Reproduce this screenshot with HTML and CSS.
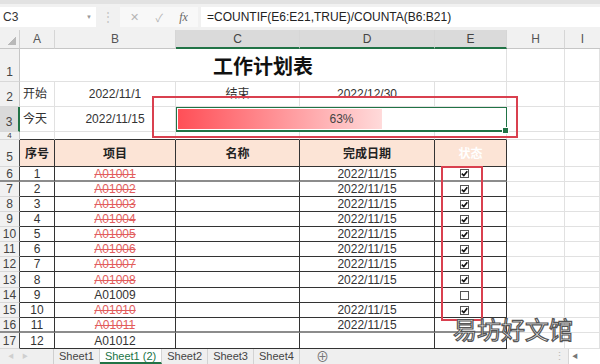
FILE: index.html
```html
<!DOCTYPE html>
<html lang="zh-CN">
<head>
  <meta charset="UTF-8" />
  <meta name="viewport" content="width=device-width, initial-scale=1.0" />
  <title>工作计划表</title>
  <link rel="stylesheet" href="styles.css">
</head>
<body>
  <div class="formula-bar">
    <div class="name-box"><span>C3</span><span class="caret">▼</span></div>
    <div class="grip">⋮</div>
    <div class="fx-buttons">
      <span class="fx-btn">✕</span>
      <span class="fx-btn">✓</span>
      <span class="fx">fx</span>
    </div>
    <div class="formula">=COUNTIF(E6:E21,TRUE)/COUNTA(B6:B21)</div>
  </div>

  <div class="sheet">
    <!-- column headers -->
    <div class="corner"></div>
    <div class="col-head">A</div>
    <div class="col-head">B</div>
    <div class="col-head sel">C</div>
    <div class="col-head sel">D</div>
    <div class="col-head sel">E</div>
    <div class="col-head">H</div>
    <div class="col-head last">I</div>

    <!-- row 1 -->
    <div class="cell row-head bottom">1</div>
    <div class="cell title">工作计划表</div>
    <div class="cell"></div>
    <div class="cell"></div>

    <!-- row 2 -->
    <div class="cell row-head bottom">2</div>
    <div class="cell left">开始</div>
    <div class="cell">2022/11/1</div>
    <div class="cell">结束</div>
    <div class="cell">2022/12/30</div>
    <div class="cell"></div>
    <div class="cell"></div>
    <div class="cell"></div>

    <!-- row 3 -->
    <div class="cell row-head bottom sel">3</div>
    <div class="cell left">今天</div>
    <div class="cell">2022/11/15</div>
    <div class="cell progress">63%</div>
    <div class="cell"></div>
    <div class="cell"></div>

    <!-- row 4 -->
    <div class="cell row-head short">4</div>
    <div class="cell edge"></div>
    <div class="cell edge"></div>
    <div class="cell edge"></div>
    <div class="cell edge"></div>
    <div class="cell edge"></div>
    <div class="cell"></div>
    <div class="cell"></div>

    <!-- row 5 -->
    <div class="cell row-head bottom tb">5</div>
    <div class="cell t th">序号</div>
    <div class="cell t th">项目</div>
    <div class="cell t th">名称</div>
    <div class="cell t th">完成日期</div>
    <div class="cell t th ghost">状态</div>
    <div class="cell"></div>
    <div class="cell"></div>

    <div id="rows" class="rows"></div>

    <div class="mark mark-progress"></div>
    <div class="mark mark-check"></div>
    <div class="watermark">易坊好文馆</div>
  </div>

  <div class="tabs">
    <div class="tab-nav"><span>◀</span><span>▶</span></div>
    <div class="tab">Sheet1</div>
    <div class="tab active">Sheet1 (2)</div>
    <div class="tab">Sheet2</div>
    <div class="tab">Sheet3</div>
    <div class="tab">Sheet4</div>
    <div class="tab-add">⊕</div>
    <div class="tab-space"></div>
    <div class="tab-grip">⋮</div>
    <div class="hscroll"><span>◀</span></div>
  </div>

  <script>
    // 序号, 项目, 是否完成, 是否显示复选框
    const tasks = [
      [1, 'A01001', true, true],
      [2, 'A01002', true, true],
      [3, 'A01003', true, true],
      [4, 'A01004', true, true],
      [5, 'A01005', true, true],
      [6, 'A01006', true, true],
      [7, 'A01007', true, true],
      [8, 'A01008', true, true],
      [9, 'A01009', false, true],
      [10, 'A01010', true, true],
      [11, 'A01011', true, false],
      [12, 'A01012', false, false]
    ];

    const checkSvg = '<svg width="7" height="7" viewBox="0 0 7 7"><path d="M0.8 3.6 L2.8 5.6 L6.3 1.2" stroke="#111" stroke-width="1.6" fill="none"/></svg>';

    const rowsEl = document.getElementById('rows');
    let html = '';

    tasks.forEach((task, i) => {
      const [no, code, done, hasBox] = task;
      const rowNo = i + 6;
      const pb = (rowNo === 6 || rowNo === 16) ? ' pb' : '';
      let box = '';
      if (hasBox) {
        box = `<span class="checkbox">${done ? checkSvg : ''}</span>`;
      }
      html += `
        <div class="cell row-head tb${pb}">${rowNo}</div>
        <div class="cell t${pb}">${no}</div>
        <div class="cell t${pb}"><span class="${done ? 'strike' : ''}">${code}</span></div>
        <div class="cell t${pb}"></div>
        <div class="cell t${pb}">${done ? '2022/11/15' : ''}</div>
        <div class="cell t chk${pb}">${box}</div>
        <div class="cell"></div>
        <div class="cell"></div>
      `;
    });

    rowsEl.innerHTML = html;
  </script>
</body>
</html>
```

FILE: styles.css
```css
* {
  box-sizing: border-box;
}

body {
  margin: 0;
  width: 600px;
  height: 364px;
  overflow: hidden;
  font-family: "Liberation Sans", "Noto Sans CJK SC", sans-serif;
  font-size: 12px;
  color: #333;
  background: #fff;
}

/* formula bar */
.formula-bar {
  display: flex;
  align-items: center;
  height: 30px;
  background: #f1f1f1;
  border-top: 4px solid #e2e2e2;
}

.name-box {
  width: 96px;
  height: 20px;
  background: #fff;
  display: flex;
  align-items: center;
  justify-content: space-between;
  padding: 0 4px 0 3px;
  color: #333;
}

.caret {
  font-size: 6px;
  color: #999;
}

.grip {
  width: 24px;
  text-align: center;
  color: #c4c4c4;
}

.fx-buttons {
  width: 78px;
  height: 20px;
  background: #f8f8f8;
  display: flex;
  align-items: center;
  justify-content: space-around;
  padding: 0 2px;
}

.fx-btn {
  color: #b5b5b5;
  font-size: 11px;
}

.fx {
  font-family: "Liberation Serif", serif;
  font-style: italic;
  color: #666;
  font-size: 12px;
}

.formula {
  flex: 1;
  height: 20px;
  margin-left: 3px;
  padding-left: 6px;
  line-height: 20px;
  background: #fff;
  color: #222;
}

/* sheet grid */
.sheet {
  position: relative;
  display: grid;
  grid-template-columns: 20px 35px 121px 124px 135px 72px 58px 35px;
  grid-template-rows: 19px 33px 25px 25px 8px 27px
    15px 15px 15px 15px 15px 15px 15px 16px 15px 15px 15px 16px;
}

.rows {
  display: contents;
}

.corner {
  background:
    linear-gradient(135deg, transparent 55%, #b9b9b9 55%) no-repeat right 3px bottom 3px / 9px 9px,
    #f1f1f1;
  border-right: 1px solid #d0d0d0;
  border-bottom: 1px solid #c6c6c6;
}

.col-head {
  display: flex;
  align-items: center;
  justify-content: center;
  background: #f1f1f1;
  color: #555;
  border-right: 1px solid #d6d6d6;
  border-bottom: 1px solid #c6c6c6;
}

.col-head.sel {
  background: #dadada;
  color: #444;
  border-bottom: 2px solid #217346;
}

.col-head.last {
  border-right: none;
}

.cell {
  display: flex;
  align-items: center;
  justify-content: center;
  overflow: hidden;
  white-space: nowrap;
  line-height: 14px;
  border-right: 1px solid #e1e1e1;
  border-bottom: 1px solid #e1e1e1;
}

.row-head {
  background: #f1f1f1;
  color: #444;
  border-right: 1px solid #c6c6c6;
  border-bottom-color: #d8d8d8;
}

.row-head.bottom {
  align-items: flex-end;
  padding-bottom: 2px;
}

.row-head.short {
  font-size: 8px;
  line-height: 7px;
}

.row-head.sel {
  background: #dadada;
  border-right: 2px solid #217346;
}

.row-head.tb {
  border-right-color: #444;
}

.left {
  justify-content: flex-start;
  padding-left: 3px;
}

.title {
  grid-column: span 5;
  font-family: "Noto Sans CJK SC", sans-serif;
  font-size: 20px;
  font-weight: 700;
  color: #111;
  line-height: 24px;
  padding-top: 2px;
}

.progress {
  position: relative;
  grid-column: span 3;
  color: #444;
  border: 1px solid #217346;
  border-bottom-width: 2px;
  overflow: visible;
  background: linear-gradient(90deg, #ff4f57, #ffdada) no-repeat 1px 1px / 62% calc(100% - 2px);
}

.progress::after {
  content: "";
  position: absolute;
  right: -3px;
  bottom: -4px;
  width: 5px;
  height: 5px;
  background: #217346;
  border: 1px solid #fff;
}

.edge {
  border-bottom-color: #333;
}

.t {
  border-right-color: #333;
  border-bottom-color: #333;
}

.th {
  background: #fce4d6;
  font-family: "Noto Sans CJK SC", sans-serif;
  font-weight: 700;
  color: #222;
}

.ghost {
  color: #fff;
}

.pb {
  border-bottom: 2px solid #8c8c8c;
}

.strike {
  color: #e25d5d;
  text-decoration: line-through;
}

.chk {
  justify-content: flex-start;
  padding-left: 25px;
}

.checkbox {
  width: 9px;
  height: 9px;
  border: 1px solid #555;
  background: #fff;
  display: flex;
  align-items: center;
  justify-content: center;
}

/* annotations */
.mark {
  position: absolute;
  border: 2px solid #d9404f;
}

.mark-progress {
  left: 152px;
  top: 66px;
  width: 366px;
  height: 42px;
}

.mark-check {
  left: 441px;
  top: 136px;
  width: 42px;
  height: 155px;
}

.watermark {
  position: absolute;
  left: 453px;
  top: 284px;
  font-family: "Noto Sans CJK SC", sans-serif;
  font-size: 24px;
  line-height: 30px;
  color: #fff;
  -webkit-text-stroke: 1.2px #555;
}

/* sheet tabs */
.tabs {
  display: flex;
  height: 15px;
  background: #efefef;
  font-size: 11px;
  line-height: 15px;
  color: #444;
}

.tab-nav {
  width: 54px;
  display: flex;
  gap: 8px;
  padding-left: 8px;
  font-size: 6px;
  color: #cfcfcf;
  border-right: 1px solid #cfcfcf;
}

.tab {
  padding: 0 5px;
  border-right: 1px solid #d3d3d3;
}

.tab.active {
  background: #fff;
  color: #217346;
  border-bottom: 2px solid #217346;
}

.tab-add {
  margin-left: 16px;
  color: #777;
  font-size: 13px;
}

.tab-space {
  flex: 1;
}

.tab-grip {
  width: 14px;
  color: #bbb;
}

.hscroll {
  width: 32px;
  background: #fff;
  border-left: 1px solid #d6d6d6;
  font-size: 6px;
  color: #777;
  padding-left: 3px;
}
```
